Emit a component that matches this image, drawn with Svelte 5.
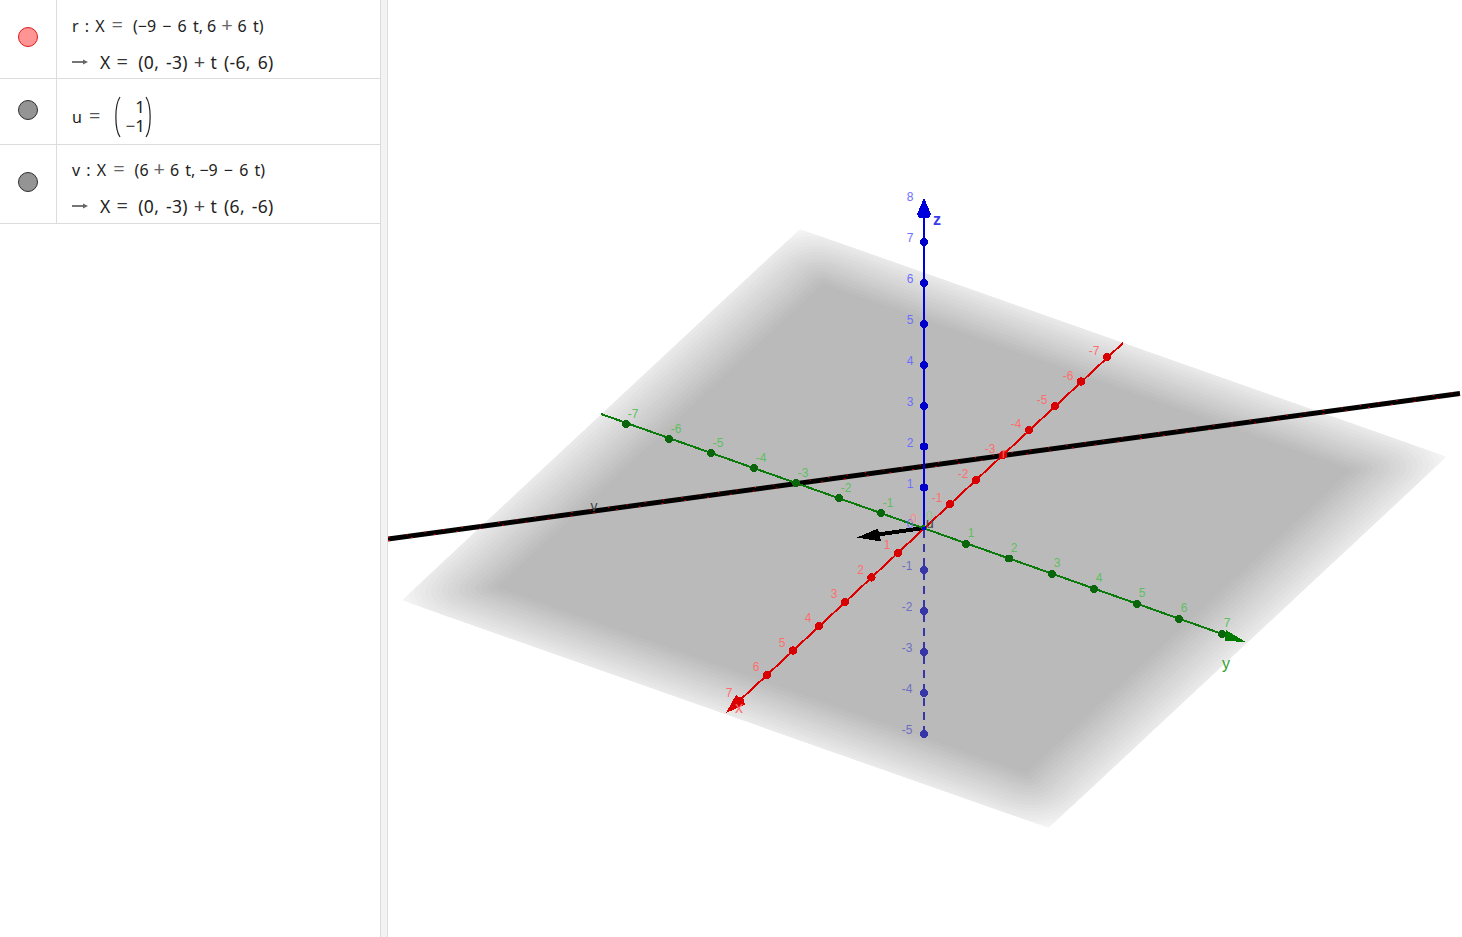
<script>
  const O = [924.25, 528.5];
  const A = [-26.45, 24.67];
  const B = [42.97, 15.13];
  const map = (a, b) => [O[0] + a * A[0] + b * B[0], O[1] + a * A[1] + b * B[1]];
  const pts = (list) => list.map((p) => p[0].toFixed(1) + ',' + p[1].toFixed(1)).join(' ');

  const H = 7.52;
  const outer = pts([map(-H, -H), map(-H, H), map(H, H), map(H, -H)]);
  const INNER = 6.1;
  const soft = (v) => Math.sign(v) * Math.pow(Math.abs(v), 2 / 3);

  function band(d) {
    const res = [];
    const corners = [[-1, -1, 180], [1, -1, 270], [1, 1, 0], [-1, 1, 90]];
    for (const [sa, sb, start] of corners) {
      for (let i = 0; i <= 10; i++) {
        const t = ((start + i * 9) * Math.PI) / 180;
        res.push(map(sa * INNER + d * soft(Math.cos(t)), sb * INNER + d * soft(Math.sin(t))));
      }
    }
    return pts(res);
  }

  const STEP = 0.1;
  const bands = [];
  for (let d = 1.85; d > 0; d -= STEP) {
    const g = Math.round(184 + (d / 1.42) * 48);
    bands.push({ d: band(d), fill: `rgb(${g},${g},${g})` });
  }

  const xTicks = [
    [1, 898, 553], [2, 871.5, 577.5], [3, 845, 602], [4, 819, 626], [5, 793, 650.5], [6, 767, 675], [7, 740, 701],
    [-1, 950, 504], [-2, 976, 480], [-3, 1003, 455], [-4, 1029, 430], [-5, 1055, 406], [-6, 1081, 381.5], [-7, 1107, 357]
  ];
  const yTicks = [
    [1, 966, 544], [2, 1009, 558.5], [3, 1052, 574], [4, 1094, 589], [5, 1137, 604], [6, 1179, 619], [7, 1222, 634],
    [-1, 881, 513], [-2, 839, 498], [-3, 796, 483], [-4, 754, 468], [-5, 711, 453], [-6, 669, 439], [-7, 626, 424]
  ];
  const zTicks = [
    [1, 487.5], [2, 446.5], [3, 406], [4, 365], [5, 324], [6, 283], [7, 242]
  ];
  const zNeg = [[-1, 570], [-2, 611], [-3, 652], [-4, 693], [-5, 734]];
</script>

<div class="app">
  <aside class="algebra">
    <div class="row row-r">
      <div class="marble-cell"><span class="marble red"></span></div>
      <div class="formula">
        <div class="line">r : X<i class="eq">=</i>(−9 − 6 t,<b></b>6<i class="op">+</i>6 t)</div>
        <div class="line out">
          <svg class="to" viewBox="0 0 16 8" width="16" height="8"><path d="M0 4H13" /><path class="tip" d="M16 4L11 1.5V6.5Z" /></svg>
          <span>X<i class="eq">=</i>(0, -3)<i class="op">+</i>t (-6, 6)</span>
        </div>
      </div>
    </div>
    <div class="row row-u">
      <div class="marble-cell"><span class="marble grey"></span></div>
      <div class="formula vec">
        <span class="uname">u<i>=</i></span>
        <svg class="paren" viewBox="0 0 8 42" width="8" height="42"><path d="M7 1C1.5 9 1.5 33 7 41" /></svg>
        <div class="matrix"><span>1</span><span>−1</span></div>
        <svg class="paren" viewBox="0 0 8 42" width="8" height="42"><path d="M1 1C6.5 9 6.5 33 1 41" /></svg>
      </div>
    </div>
    <div class="row row-v">
      <div class="marble-cell"><span class="marble grey"></span></div>
      <div class="formula">
        <div class="line">v : X<i class="eq">=</i>(6<i class="op">+</i>6 t,<b></b>−9 − 6 t)</div>
        <div class="line out">
          <svg class="to" viewBox="0 0 16 8" width="16" height="8"><path d="M0 4H13" /><path class="tip" d="M16 4L11 1.5V6.5Z" /></svg>
          <span>X<i class="eq">=</i>(0, -3)<i class="op">+</i>t (6, -6)</span>
        </div>
      </div>
    </div>
  </aside>
  <div class="splitter"></div>
  <main class="view">
    <svg class="scene" viewBox="388 0 1074 937" width="1074" height="937">
      <defs>
        <clipPath id="plane"><polygon points={outer} /></clipPath>
      </defs>

      <g clip-path="url(#plane)">
        {#each bands as b}
          <polygon points={b.d} fill={b.fill} />
        {/each}
      </g>

      <line x1="388" y1="539" x2="1460" y2="393.5" stroke="#000" stroke-width="5" />
      <line x1="388" y1="540.8" x2="1460" y2="395.3" stroke="#e00000" stroke-width="1" stroke-dasharray="2 21" />
      <line x1="388" y1="537.4" x2="1460" y2="391.9" stroke="#e00000" stroke-width="1" stroke-dasharray="1.5 17" />

      <line class="jag" x1="924" y1="528" x2="874" y2="535" stroke="#000" stroke-width="4" />
      <polygon class="jag" points="857,537.5 878,528.5 881,541.5" fill="#000" />

      <line class="jag" x1="601" y1="414" x2="1228" y2="636" stroke="#0a7a0a" stroke-width="2" />
      <polygon class="jag" points="1246,642 1226,630 1225,641" fill="#007a00" />
      {#each yTicks as [n, x, y]}
        <circle class="jag" cx={x} cy={y} r="4" fill="#0a660a" />
        <text class="tick" x={x + (n < 0 ? 7 : 5)} y={y - (n < 0 ? 6 : 7)} fill="#5fbf5f">{n}</text>
      {/each}

      <line class="jag" x1="1123" y1="343" x2="738" y2="702" stroke="#dd0000" stroke-width="2" />
      <polygon class="jag" points="726,713 736,695 746,704" fill="#dd0000" />
      {#each xTicks as [n, x, y]}
        <circle class="jag" cx={x} cy={y} r="4.2" fill="#d80000" />
        <text class="tick" x={x - (n < 0 ? 13 : 11)} y={y - (n < 0 ? 2 : 4)} fill="#ff6e6e">{n}</text>
      {/each}

      <line class="jag" x1="924" y1="528" x2="924" y2="212" stroke="#0000dd" stroke-width="2" />
      <polygon class="jag" points="924,198 917,214 919,218 929,218 931,214" fill="#0000dd" />
      {#each zTicks as [n, y]}
        <circle class="jag" cx="924" cy={y} r="4" fill="#0000cc" />
        <text class="tick" x="910" y={y} fill="#6e6eff">{n}</text>
      {/each}
      <text class="tick" x="910" y="201" fill="#6e6eff">8</text>

      <line class="jag" x1="924" y1="530" x2="924" y2="734" stroke="#3636a8" stroke-width="2" stroke-dasharray="8 6" />
      {#each zNeg as [n, y]}
        <circle class="jag" cx="924" cy={y} r="4" fill="#3636a8" />
        <text class="tick" x="907" y={y} fill="#6e6ec4">{n}</text>
      {/each}

      <rect x="922" y="526" width="4" height="4" fill="#0000dd" />
      <rect x="922" y="525" width="3" height="2" fill="#0a7a0a" />

      <text class="tick" x="910" y="528" fill="#6e6eff">0</text>
      <text class="tick" x="929" y="520" fill="#8ac88a">0</text>
      <text class="tick" x="913.5" y="523" fill="#ff8a8a">0</text>
      <text class="name" x="930" y="528" fill="#444">u</text>

      <text class="name" x="594" y="511" fill="#444">v</text>
      <text class="name" x="1004" y="458" fill="#ff5a5a">r</text>

      <text class="axis" x="739" y="713" fill="#ff6e6e">x</text>
      <text class="axis" x="1226" y="669" fill="#2f9f2f">y</text>
      <text class="axis z" x="937" y="225" fill="#3a3aee">z</text>
    </svg>
  </main>
</div>

<style>
  :global(body) {
    margin: 0;
    background: #fff;
  }
  .app {
    display: flex;
    height: 937px;
    width: 1462px;
    overflow: hidden;
    font-family: "Noto Sans", "Liberation Sans", sans-serif;
    color: #222;
  }
  .algebra {
    width: 380px;
    flex: none;
    display: flex;
    flex-direction: column;
    border-right: 1px solid #dcdcdc;
  }
  .row {
    display: flex;
    border-bottom: 1px solid #dcdcdc;
    box-sizing: border-box;
  }
  .row-r { height: 79px; }
  .row-u { height: 66px; }
  .row-v { height: 79px; }
  .marble-cell {
    width: 56px;
    flex: none;
    border-right: 1px solid #dcdcdc;
    display: flex;
    justify-content: center;
  }
  .marble {
    width: 18px;
    height: 18px;
    border-radius: 50%;
    border: 1px solid;
    margin-left: -1px;
  }
  .row-r .marble { margin-top: 27px; }
  .row-u .marble { margin-top: 21px; }
  .row-v .marble { margin-top: 27px; }
  .marble.red { background: #ff9494; border-color: #e01818; }
  .marble.grey { background: #949494; border-color: #2e2e2e; }
  .formula {
    padding-left: 15px;
    display: flex;
    flex-direction: column;
    font-size: 16px;
  }
  .line {
    height: 36px;
    display: block;
    line-height: 36px;
    white-space: pre;
    word-spacing: 2px;
  }
  .row-r .formula { padding-top: 8px; }
  .row-v .formula { padding-top: 7px; }
  .line i {
    font-style: normal;
    color: #666;
    font-size: 20px;
    line-height: 0;
  }
  .line .eq {
    margin: 0 10px 0 7px;
  }
  .line .op {
    margin: 0 5px;
  }
  .line b {
    display: inline-block;
    width: 4px;
  }
  .line.out {
    display: flex;
    align-items: center;
    font-size: 17.5px;
    letter-spacing: 0.3px;
    word-spacing: 2px;
  }
  .line.out .eq {
    margin: 0 10px 0 6px;
    color: #333;
  }
  .line.out .op {
    margin: 0 5px 0 6px;
    color: #444;
  }
  .to {
    margin-right: 12px;
  }
  .to path {
    stroke: #666;
    stroke-width: 1.8;
    fill: none;
  }
  .to .tip {
    fill: #666;
    stroke: none;
  }
  .vec {
    flex-direction: row;
    align-items: center;
    padding-top: 10px;
    padding-bottom: 0;
  }
  .uname {
    width: 41px;
    flex: none;
  }
  .vec i {
    font-style: normal;
    color: #555;
    font-size: 20px;
    line-height: 0;
    margin-left: 7px;
  }
  .paren path {
    stroke: #222;
    stroke-width: 1.2;
    fill: none;
  }
  .matrix {
    display: flex;
    flex-direction: column;
    align-items: flex-end;
    font-size: 17px;
    line-height: 19px;
    width: 22px;
    margin: 0 0 0 2px;
    padding-bottom: 2px;
  }
  .splitter {
    width: 6px;
    flex: none;
    background: #f3f3f3;
    border-right: 1px solid #dedede;
  }
  .view {
    flex: 1;
    min-width: 0;
    background: #fff;
    overflow: hidden;
  }
  .scene {
    display: block;
  }
  .jag {
    shape-rendering: crispEdges;
  }
  .tick {
    font-family: "Liberation Sans", sans-serif;
    font-size: 12px;
    text-anchor: middle;
  }
  .name {
    font-family: "Liberation Sans", sans-serif;
    font-size: 14px;
    text-anchor: middle;
  }
  .axis {
    font-family: "Liberation Sans", sans-serif;
    font-size: 16px;
    text-anchor: middle;
  }
  .axis.z {
    font-weight: bold;
  }
</style>
